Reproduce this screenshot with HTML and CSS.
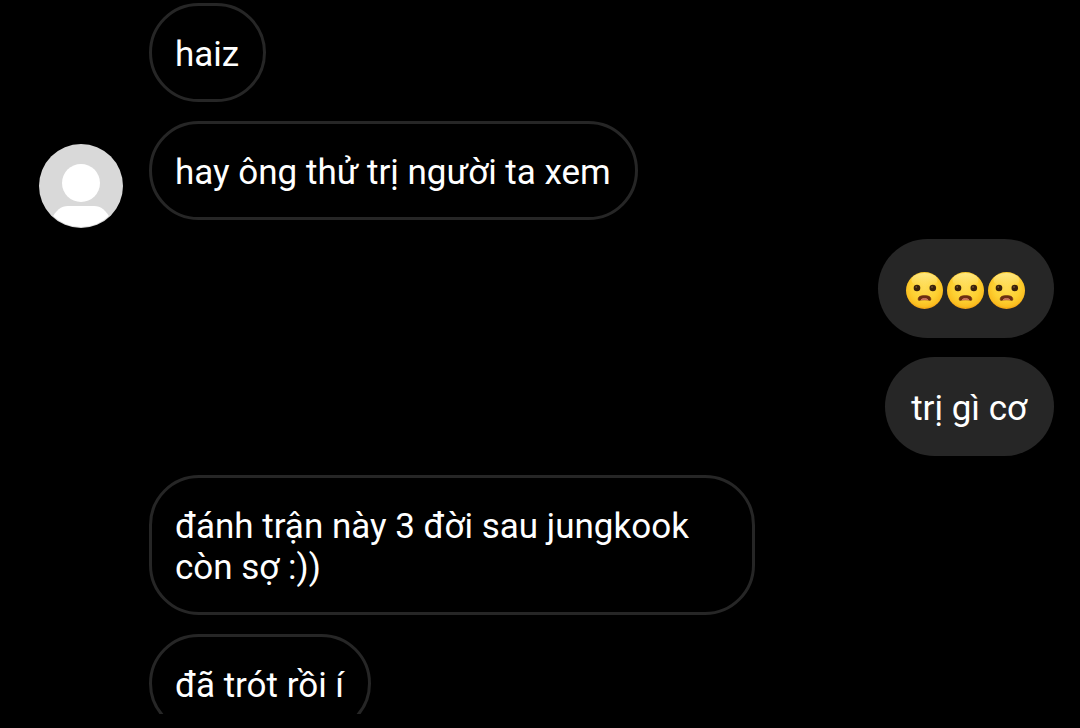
FILE: index.html
```html
<!DOCTYPE html>
<html lang="vi">

<head>
  <meta charset="UTF-8">
  <meta name="viewport" content="width=device-width, initial-scale=1.0">
  <title>Chat</title>
  <link rel="stylesheet" href="styles.css">
</head>

<body>

  <!-- Shared emoji drawing -->
  <svg class="defs" aria-hidden="true">
    <defs>
      <radialGradient id="face" cx="50%" cy="42%" r="60%">
        <stop offset="0" stop-color="#ffdc55"></stop>
        <stop offset="0.6" stop-color="#fdd031"></stop>
        <stop offset="0.86" stop-color="#fbbe20"></stop>
        <stop offset="1" stop-color="#ea920f"></stop>
      </radialGradient>
      <linearGradient id="shine" x1="0" y1="0" x2="0" y2="1">
        <stop offset="0" stop-color="#fff3a8" stop-opacity="0.7"></stop>
        <stop offset="1" stop-color="#fff3a8" stop-opacity="0"></stop>
      </linearGradient>
      <symbol id="frown" viewBox="0 0 41 41">
        <circle cx="20.5" cy="20.5" r="18.5" fill="url(#face)"></circle>
        <ellipse cx="20.5" cy="10" rx="13" ry="7" fill="url(#shine)"></ellipse>
        <circle cx="13" cy="18" r="3.3" fill="#39210b"></circle>
        <circle cx="28.8" cy="18" r="3.3" fill="#39210b"></circle>
        <circle cx="12.2" cy="17" r="0.8" fill="#8c6a3c"></circle>
        <circle cx="28" cy="17" r="0.8" fill="#8c6a3c"></circle>
        <path d="M14.2 29.4C14 26.4 17 25.6 20.5 25.6C24 25.6 27 26.4 26.8 29.4C26.7 30.6 25.8 30.8 25 30.2C22.5 29.6 18.5 29.6 16 30.2C15.2 30.8 14.3 30.6 14.2 29.4Z" fill="#6b2d12" stroke="#6b2d12" stroke-width="0.6"></path>
        <path d="M17 29.8C18 28 23 28 24 29.8C22 29.5 19 29.5 17 29.8Z" fill="#e08573" stroke="#d47765" stroke-width="0.8"></path>
      </symbol>
    </defs>
  </svg>

  <!-- Messages -->
  <main class="chat">
    <div class="row">
      <p class="bubble received">haiz</p>
    </div>

    <div class="row">
      <svg class="avatar" viewBox="0 0 84 84" role="img" aria-label="Avatar">
        <defs>
          <clipPath id="avatarClip"><circle cx="42" cy="42" r="41"></circle></clipPath>
        </defs>
        <circle cx="42" cy="42" r="42" fill="#d9d9d9"></circle>
        <g clip-path="url(#avatarClip)" fill="#fff">
          <circle cx="42" cy="39" r="19"></circle>
          <path d="M12 76C17 66 22 62 29 62H55C62 62 67 66 72 76V84H12Z"></path>
        </g>
      </svg>
      <p class="bubble received">hay ông thử trị người ta xem</p>
    </div>

    <div class="row mine">
      <p class="bubble sent">
        <span class="emojis" role="img" aria-label="😦😦😦">
          <svg class="emoji"><use href="#frown"></use></svg>
          <svg class="emoji"><use href="#frown"></use></svg>
          <svg class="emoji"><use href="#frown"></use></svg>
        </span>
      </p>
    </div>

    <div class="row mine">
      <p class="bubble sent">trị gì cơ</p>
    </div>

    <div class="row">
      <p class="bubble received">đánh trận này 3 đời sau jungkook còn sợ :))</p>
    </div>

    <div class="row">
      <p class="bubble received">đã trót rồi í</p>
    </div>
  </main>

</body>

</html>
```

FILE: styles.css
```css
* {
  box-sizing: border-box;
}

/* Page */
body {
  margin: 0;
  height: 100vh;
  padding-bottom: 14px;
  background: #000;
  color: #fff;
  font-family: Roboto, "Noto Sans", sans-serif;
  font-size: 35px;
  line-height: 41px;
}

.defs {
  position: absolute;
  width: 0;
  height: 0;
}

/* Message List */
.chat {
  display: flex;
  flex-direction: column;
  gap: 19px;
  height: 100%;
  padding: 3px 26px 0 39px;
  overflow: hidden;
}

.row {
  display: grid;
  grid-template-columns: 84px 1fr;
  column-gap: 26px;
  flex-shrink: 0;
}

/* Avatar */
.avatar {
  grid-column: 1;
  align-self: end;
  width: 84px;
  height: 84px;
  margin-bottom: -8px;
}

/* Bubbles */
.bubble {
  grid-column: 2;
  grid-row: 1;
  justify-self: start;
  max-width: 67%;
  margin: 0;
  padding: 31px 27px 27px 26px;
  border-radius: 50px;
}

.received {
  padding: 28px 24px 24px 23px;
  border: 3px solid #262626;
}

.sent {
  background: #262626;
}

.mine .bubble {
  justify-self: end;
}

/* Emoji */
.emojis {
  display: flex;
}

.emoji {
  width: 41px;
  height: 41px;
}
```
